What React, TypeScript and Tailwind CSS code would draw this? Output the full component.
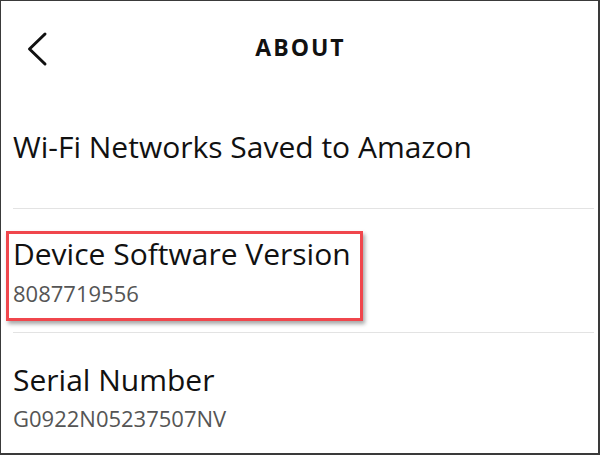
const rows = [
  { title: "Wi-Fi Networks Saved to Amazon" },
  { title: "Device Software Version", value: "8087719556" },
  { title: "Serial Number", value: "G0922N05237507NV" },
];

function BackChevron() {
  return (
    <svg className="absolute left-[24px] top-[30px]" width="26" height="36" viewBox="0 0 26 36" fill="none">
      <path d="M20 3 L4.5 18 L20 33" stroke="#111" strokeWidth="3" strokeLinecap="round" strokeLinejoin="round" />
    </svg>
  );
}

export default function App() {
  return (
    <div
      className="flex h-[455px] w-[600px] flex-col overflow-hidden border-t border-l border-r-2 border-b-2 border-[#3a3a3a] bg-white text-[#111]"
      style={{ fontFamily: '"Open Sans", "Noto Sans", sans-serif' }}
    >
      <header className="relative flex h-[95px] shrink-0 items-start justify-center pt-[35px]">
        <BackChevron />
        <h1 className="pl-[2px] text-[23px] leading-none font-bold tracking-[2px]">ABOUT</h1>
      </header>

      <div className="ml-[12px] mr-[4px] h-[113px] shrink-0 border-b border-[#e3e3e3] pt-[36px]">
        <div className="text-[30px] leading-none">{rows[0].title}</div>
      </div>

      <div className="relative ml-[12px] mr-[4px] h-[124px] shrink-0 border-b border-[#e3e3e3] pt-[30px]">
        <div className="text-[30px] leading-none">{rows[1].title}</div>
        <div className="mt-[13px] text-[22px] leading-none text-[#555]">{rows[1].value}</div>
        <div className="pointer-events-none absolute left-[-7px] top-[22px] h-[90px] w-[357px] border-[3px] border-[#f0464c] shadow-[2px_3px_4px_rgba(0,0,0,0.35)]" />
      </div>

      <div className="ml-[12px] flex-1 pt-[32px]">
        <div className="text-[30px] leading-none">{rows[2].title}</div>
        <div className="mt-[12px] text-[22px] leading-none text-[#555]">{rows[2].value}</div>
      </div>
    </div>
  );
}
